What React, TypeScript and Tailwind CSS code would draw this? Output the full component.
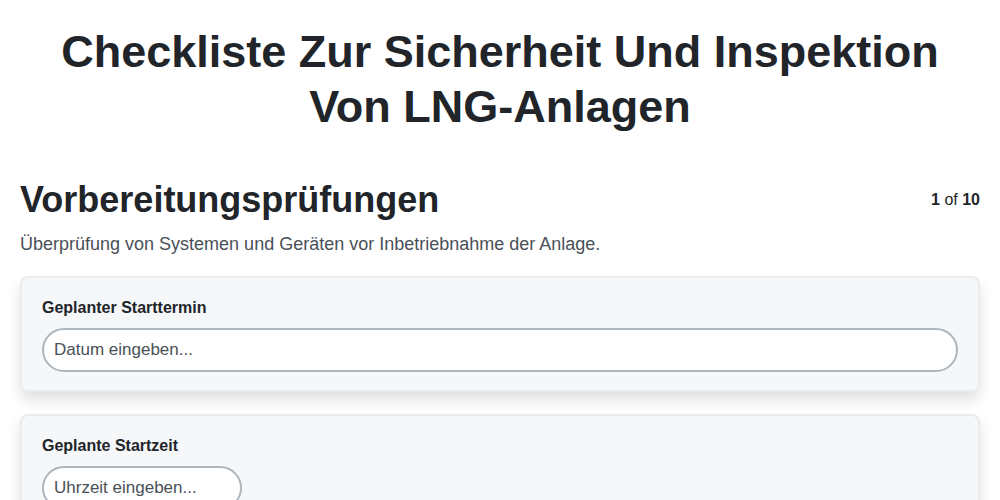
import React from "react";

export default function App() {
  return (
    <div className="min-h-screen bg-white px-5 text-[#212529]" style={{ fontFamily: '"Liberation Sans", Arial, sans-serif' }}>
      <h1 className="mx-auto pt-[24px] text-center text-[45px] font-bold leading-[55px] max-w-[900px]">
        Checkliste Zur Sicherheit Und Inspektion Von LNG-Anlagen
      </h1>
      <div className="mt-[44px] flex items-start justify-between">
        <h2 className="text-[36px] font-bold leading-[44px]">Vorbereitungsprüfungen</h2>
        <div className="mt-[10px] text-base">
          <span className="font-bold">1</span> of <span className="font-bold">10</span>
        </div>
      </div>
      <p className="mt-[10px] text-[18px] leading-6 text-[#495057]">
        Überprüfung von Systemen und Geräten vor Inbetriebnahme der Anlage.
      </p>
      <div className="mt-[20px] flex flex-col gap-[22px]">
        <div className="rounded-lg border-2 border-[#e9ecef] bg-[#f6f7f9] px-[20px] pt-[20px] pb-[18px] shadow-[0_8px_14px_rgba(0,0,0,0.12)]">
          <label className="block text-base font-bold leading-5">Geplanter Starttermin</label>
          <input
            className="mt-[10px] block h-[44px] w-full rounded-full border-2 border-[#adb5bd] bg-white px-[10px] text-[17px] text-[#495057] placeholder:text-[#495057] outline-none"
            placeholder="Datum eingeben..."
          />
        </div>
        <div className="rounded-lg border-2 border-[#e9ecef] bg-[#f6f7f9] px-[20px] pt-[20px] pb-[18px] shadow-[0_8px_14px_rgba(0,0,0,0.12)]">
          <label className="block text-base font-bold leading-5">Geplante Startzeit</label>
          <input
            className="mt-[10px] block h-[44px] w-[200px] rounded-full border-2 border-[#adb5bd] bg-white px-[10px] text-[17px] text-[#495057] placeholder:text-[#495057] outline-none"
            placeholder="Uhrzeit eingeben..."
          />
        </div>
      </div>
    </div>
  );
}
